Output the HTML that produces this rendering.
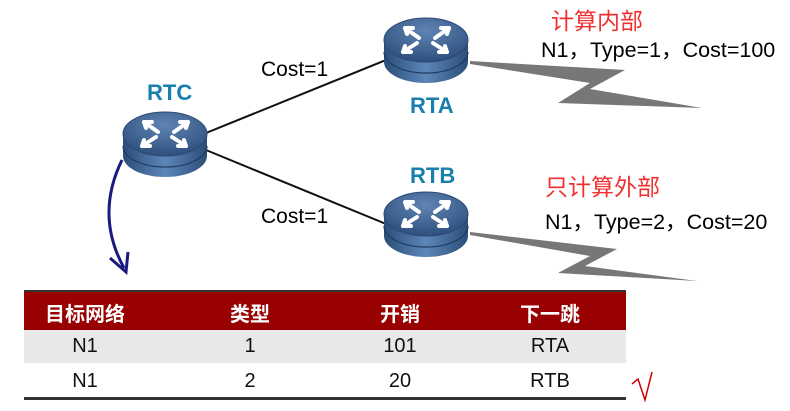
<!DOCTYPE html>
<html><head><meta charset="utf-8"><style>
body{margin:0;width:790px;height:411px;background:#fff;overflow:hidden;position:relative;font-family:"Liberation Sans","Noto Sans CJK SC",sans-serif}
.t{position:absolute;white-space:nowrap}
.c{position:absolute;white-space:nowrap;transform:translateX(-50%)}
</style></head><body>
<svg width="790" height="411" style="position:absolute;left:0;top:0">
<defs>
<linearGradient id="side" x1="0" x2="1"><stop offset="0" stop-color="#2b4d78"/><stop offset="0.5" stop-color="#5c86b8"/><stop offset="1" stop-color="#2b4d78"/></linearGradient>
<radialGradient id="top" cx="0.5" cy="0.3" r="0.7"><stop offset="0" stop-color="#5f84b4"/><stop offset="1" stop-color="#2e4f7c"/></radialGradient>
<g id="r">
<path d="M1 24 V46 A42 21 0 0 0 85 46 V24 Z" fill="url(#side)"/>
<path d="M1 36 A42 21 0 0 0 85 36" fill="none" stroke="#1e3a60" stroke-width="1.2"/>
<ellipse cx="43" cy="24" rx="42" ry="22" fill="url(#top)" stroke="#2a4a74"/>
<g stroke="#fff" stroke-width="4" fill="none" stroke-linecap="round">
<path d="M22 12 L36 22 M22 12 L30 12 M22 12 L24 18"/>
<path d="M66 12 L52 22 M66 12 L58 12 M66 12 L64 18"/>
<path d="M20 36 L34 27 M20 36 L28 36 M20 36 L22 30"/>
<path d="M64 36 L50 27 M64 36 L56 36 M64 36 L62 30"/>
</g>
</g>
</defs>
<line x1="206" y1="133" x2="386" y2="60" stroke="#111" stroke-width="2"/>
<line x1="206" y1="150" x2="386" y2="224" stroke="#111" stroke-width="2"/>
<polygon points="470,61 625,70 590,89 702,108 558,103 590,83 470,64" fill="#777"/>
<polygon points="470,232 617,249 585,266 697,281 558,273 590,256 470,235" fill="#777"/>
<path d="M122 160 Q95 215 124 268" fill="none" stroke="#1a1a80" stroke-width="3"/>
<path d="M110 258 L126 272 L128 252" fill="none" stroke="#1a1a80" stroke-width="3"/>
<use href="#r" x="122" y="110"/>
<use href="#r" x="383" y="16"/>
<use href="#r" x="383" y="190"/>
<rect x="24" y="290" width="602" height="2" fill="#333"/>
<rect x="24" y="292" width="602" height="38" fill="#990000"/>
<rect x="24" y="330" width="602" height="33" fill="#e8e8e8"/>
<rect x="24" y="397" width="602" height="3" fill="#333"/>
<path d="M632 384 L638 379 L645 400 L652 372" fill="none" stroke="#c00" stroke-width="1.5"/>
</svg>
<div class="t" style="left:147px;top:80px;font-size:22px;font-weight:bold;color:#1a7fae">RTC</div>
<div class="t" style="left:410px;top:93px;font-size:22px;font-weight:bold;color:#1a7fae">RTA</div>
<div class="t" style="left:410px;top:163px;font-size:22px;font-weight:bold;color:#1a7fae">RTB</div>
<div class="t" style="left:261px;top:58px;font-size:21px">Cost=1</div>
<div class="t" style="left:261px;top:205px;font-size:21px">Cost=1</div>
<div class="t" style="left:551px;top:2px;font-size:23px;color:#f03030">计算内部</div>
<div class="t" style="left:541px;top:33px;font-size:21.5px">N1，Type=1，Cost=100</div>
<div class="t" style="left:545px;top:168px;font-size:23px;color:#f03030">只计算外部</div>
<div class="t" style="left:545px;top:205px;font-size:21.5px">N1，Type=2，Cost=20</div>
<div style="font-size:20px;color:#fff;font-weight:bold">
<div class="c" style="left:85px;top:298px">目标网络</div>
<div class="c" style="left:250px;top:298px">类型</div>
<div class="c" style="left:400px;top:298px">开销</div>
<div class="c" style="left:550px;top:298px">下一跳</div>
</div>
<div style="font-size:20px;color:#111">
<div class="c" style="left:85px;top:335px">N1</div>
<div class="c" style="left:250px;top:335px">1</div>
<div class="c" style="left:400px;top:335px">101</div>
<div class="c" style="left:550px;top:335px">RTA</div>
<div class="c" style="left:85px;top:370px">N1</div>
<div class="c" style="left:250px;top:370px">2</div>
<div class="c" style="left:400px;top:370px">20</div>
<div class="c" style="left:550px;top:370px">RTB</div>
</div>
</body></html>
